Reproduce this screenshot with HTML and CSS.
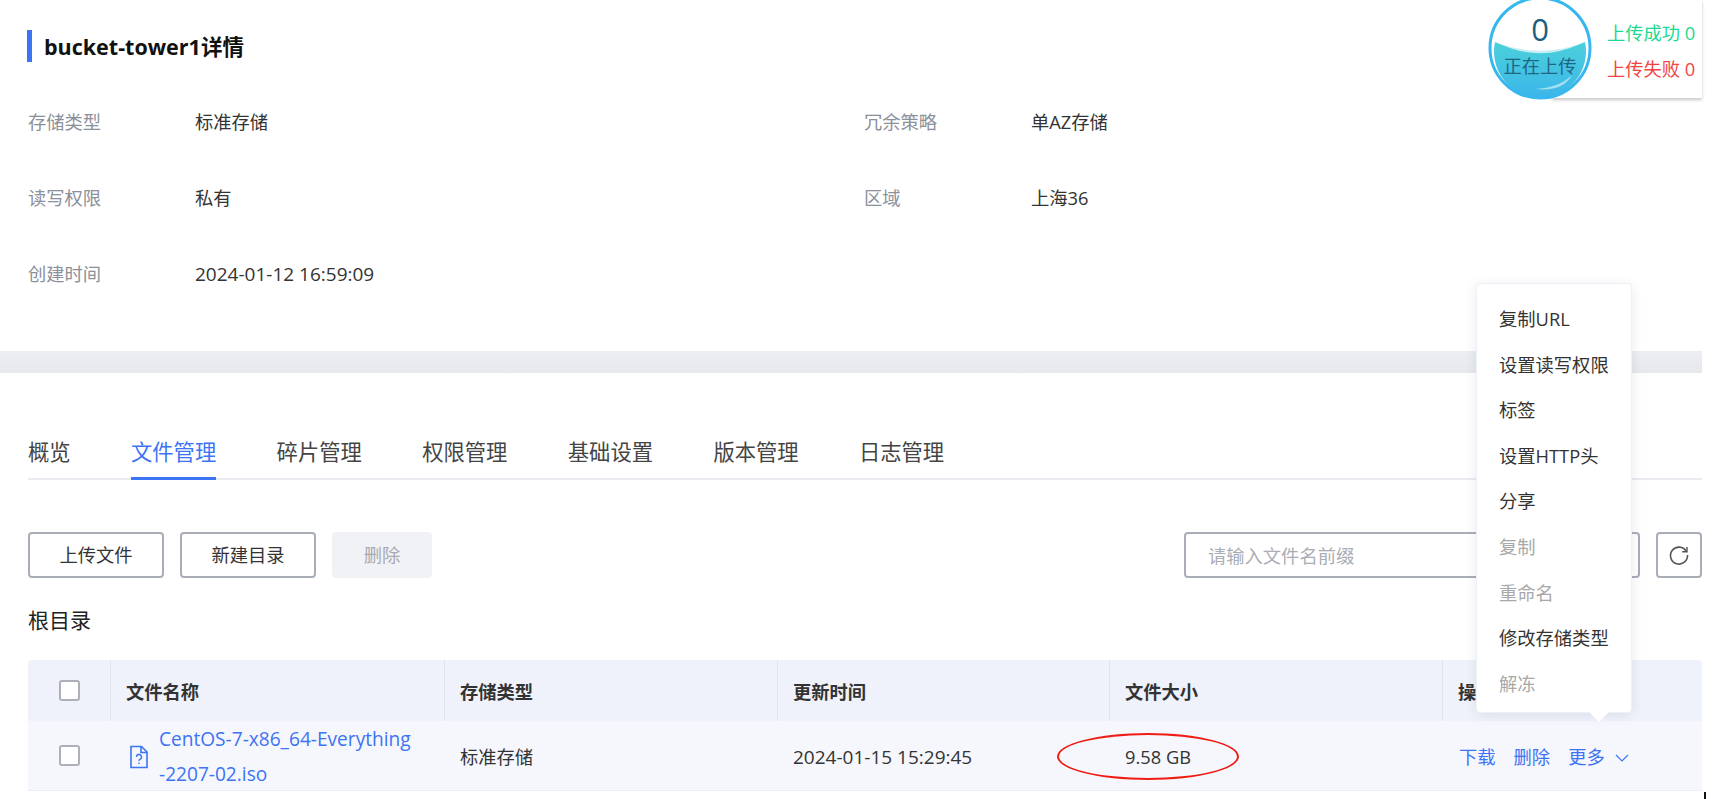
FILE: index.html
```html
<!DOCTYPE html>
<html>
<head>
  <title>bucket-tower1详情</title>
  <link rel="stylesheet" href="styles.css">
</head>
<body>
  <div class="page">
    <section class="detail">
      <h1 class="detail-title">bucket-tower1详情</h1>
      <div class="info-grid">
        <div class="info-item"><span class="info-label">存储类型</span><span>标准存储</span></div>
        <div class="info-item"><span class="info-label">冗余策略</span><span>单AZ存储</span></div>
        <div class="info-item"><span class="info-label">读写权限</span><span>私有</span></div>
        <div class="info-item"><span class="info-label">区域</span><span>上海36</span></div>
        <div class="info-item"><span class="info-label">创建时间</span><span class="date">2024-01-12 16:59:09</span></div>
      </div>
    </section>

    <div class="band"></div>

    <section class="files">
      <nav class="tabs">
        <a>概览</a>
        <a class="active">文件管理</a>
        <a>碎片管理</a>
        <a>权限管理</a>
        <a>基础设置</a>
        <a>版本管理</a>
        <a>日志管理</a>
      </nav>

      <div class="toolbar">
        <button class="btn">上传文件</button>
        <button class="btn">新建目录</button>
        <button class="btn btn-disabled">删除</button>
        <div class="search">请输入文件名前缀</div>
        <button class="btn-refresh">
          <svg width="22" height="22" viewBox="0 0 22 22" fill="none" stroke="#555" stroke-width="1.6">
            <path d="M18.3 7.2A8.5 8.5 0 1 0 19.5 11"/>
            <path d="M19 3v4.8h-4.8" stroke-width="1.4"/>
          </svg>
        </button>
      </div>

      <div class="crumb">根目录</div>

      <div class="table">
        <div class="table-row table-head">
          <div class="cell cell-check"><span class="checkbox"></span></div>
          <div class="cell cell-name">文件名称</div>
          <div class="cell cell-type">存储类型</div>
          <div class="cell cell-time">更新时间</div>
          <div class="cell cell-size">文件大小</div>
          <div class="cell cell-action">操作</div>
        </div>
        <div class="table-row table-body">
          <div class="cell cell-check"><span class="checkbox"></span></div>
          <div class="cell cell-name">
            <svg class="file-icon" width="20" height="24" viewBox="0 0 20 24" fill="none" stroke="#3d73f5" stroke-width="1.6">
              <path d="M2 1.5h10.5l5.5 5.5v15.5H2z"/>
              <path d="M12 1.5v6h6"/>
              <path d="M7.5 12a2.5 2.5 0 1 1 3.6 2.2c-.8.4-1.1.9-1.1 1.8" stroke-width="1.4"/>
              <path d="M10 17.5v1.5" stroke-width="1.4"/>
            </svg>
            <a class="file-link">CentOS-7-x86_64-Everything<br>-2207-02.iso</a>
          </div>
          <div class="cell cell-type">标准存储</div>
          <div class="cell cell-time date">2024-01-15 15:29:45</div>
          <div class="cell cell-size">9.58 GB</div>
          <div class="cell cell-action">
            <a>下载</a>
            <a>删除</a>
            <a>更多</a>
            <svg width="14" height="8" viewBox="0 0 14 8" fill="none" stroke="#3d73f5" stroke-width="1.2"><path d="M1 1l6 6 6-6"/></svg>
          </div>
        </div>
      </div>
    </section>
  </div>

  <!-- 上传状态悬浮框 -->
  <div class="upload-widget">
    <div class="upload-stats">
      <div class="stat-ok">上传成功 0</div>
      <div class="stat-fail">上传失败 0</div>
    </div>
    <svg class="upload-ball" width="106" height="106" viewBox="0 0 106 106">
      <defs>
        <linearGradient id="water" x1="0" y1="0" x2="0" y2="1">
          <stop offset="0" stop-color="#4bd0da"/>
          <stop offset="1" stop-color="#3cb6ea"/>
        </linearGradient>
      </defs>
      <circle cx="53" cy="53" r="51" fill="#fff"/>
      <path d="M8 47Q53 67 98 47A46 46 0 1 1 8 47z" fill="url(#water)"/>
      <path d="M12 48.5Q53 63 94 48.5Q53 68 12 48.5z" fill="#c8eef2"/>
      <path d="M48 94Q72 93 85 80Q76 97 48 94z" fill="#a5e0f2"/>
      <circle cx="53" cy="53" r="50" fill="none" stroke="#37b7ee" stroke-width="3"/>
      <text x="53" y="46" class="ball-num">0</text>
      <text x="53" y="78" class="ball-text">正在上传</text>
    </svg>
  </div>

  <!-- 更多 下拉菜单 -->
  <ul class="dropdown">
    <li>复制URL</li>
    <li>设置读写权限</li>
    <li>标签</li>
    <li>设置HTTP头</li>
    <li>分享</li>
    <li class="disabled">复制</li>
    <li class="disabled">重命名</li>
    <li>修改存储类型</li>
    <li class="disabled">解冻</li>
  </ul>

  <div class="red-mark"></div>
  <div class="corner-tick"></div>
</body>
</html>
```

FILE: styles.css
```css
* {
  box-sizing: border-box;
}

html,
body {
  margin: 0;
  height: 799px;
  overflow: hidden;
  background-color: #fff;
}

body {
  position: relative;
  font-family: "Open Sans", "Noto Sans CJK SC", sans-serif;
  font-size: 18.3px;
  line-height: 24px;
  color: #333;
}

.page {
  width: 1702px;
}

.detail {
  height: 351px;
  padding: 30px 0 0 28px;
}

.detail-title {
  margin: 0 0 0 -1px;
  height: 32px;
  padding: 1px 0 0 12px;
  border-left: 5px solid #3d73f5;
  font-size: 21.5px;
  line-height: 32px;
  font-weight: bold;
  color: #111;
}

.info-grid {
  display: grid;
  grid-template-columns: 836px 1fr;
  grid-auto-rows: 75.8px;
  margin-top: 47px;
}

.info-item {
  display: flex;
  align-items: center;
  height: 24px;
  margin-top: 1px;
}

.info-label {
  width: 167px;
  color: #8b909b;
}

.date {
  font-size: 19px;
}

.band {
  height: 22px;
  background: linear-gradient(#eceef2, #e6e8ec);
}

.files {
  padding: 0 0 0 28px;
}

.tabs {
  display: flex;
  gap: 60.4px;
  height: 107px;
  padding-top: 63px;
  border-bottom: 2px solid #e9ebf0;
  font-size: 21.3px;
  line-height: 32px;
  color: #444;
}

.tabs a {
  height: 44px;
}

.tabs .active {
  color: #3d73f5;
  border-bottom: 3px solid #3d73f5;
}

.toolbar {
  display: flex;
  align-items: center;
  gap: 16px;
  margin-top: 52px;
  height: 46px;
}

.btn {
  width: 136px;
  height: 46px;
  padding: 0;
  background: #fff;
  border: 2px solid #a9adb8;
  border-radius: 4px;
  font: inherit;
  color: #333;
}

.btn-disabled {
  width: 100px;
  background: #f1f2f6;
  border-color: #f1f2f6;
  color: #a8aab0;
}

.search {
  width: 456px;
  height: 46px;
  margin-left: auto;
  padding: 10px 22px;
  border: 2px solid #a9adb8;
  border-radius: 4px;
  color: #aaadb5;
}

.btn-refresh {
  display: flex;
  align-items: center;
  justify-content: center;
  width: 46px;
  height: 46px;
  padding: 0;
  background: #fff;
  border: 2px solid #a9adb8;
  border-radius: 4px;
}

.crumb {
  margin-top: 27px;
  font-size: 21px;
  line-height: 30px;
  color: #222;
}

.table {
  margin-top: 25px;
}

.table-row {
  display: flex;
  align-items: center;
}

.table-head {
  height: 61px;
  background-color: #eff2fa;
  border-radius: 4px 4px 0 0;
  font-weight: bold;
}

.table-body {
  height: 70px;
  background-color: #f5f7fc;
  border-bottom: 1px solid #edeff5;
}

.cell {
  display: flex;
  align-items: center;
  height: 100%;
  padding: 2px 0 0 15px;
}

.table-head .cell {
  border-right: 1px solid #e1e4ec;
}

.table-head .cell:last-child {
  border-right: 0;
}

.cell-check {
  justify-content: center;
  width: 83px;
  padding: 0;
}

.cell-name {
  width: 334px;
}

.cell-type {
  width: 333px;
}

.cell-time {
  width: 332px;
}

.cell-size {
  width: 333px;
}

.cell-action {
  flex: 1;
}

.table-body .cell-action {
  gap: 18px;
  padding-left: 16px;
  color: #3d73f5;
}

.table-body .cell-action svg {
  margin-left: -8px;
  margin-top: 2px;
}

.checkbox {
  width: 21px;
  height: 21px;
  background: #fff;
  border: 2px solid #adb0b9;
  border-radius: 3px;
}

.file-icon {
  flex: none;
  margin: 0 10px 0 3px;
}

.file-link {
  font-size: 19.1px;
  line-height: 35px;
  color: #3d73f5;
}

.upload-widget {
  position: absolute;
  top: 0;
  left: 1487px;
  width: 215px;
  height: 100px;
}

.upload-stats {
  position: absolute;
  top: 0;
  right: 0;
  width: 150px;
  height: 98px;
  padding: 15px 0 0 55px;
  background: #fff;
  box-shadow: 0 2px 3px rgba(0, 0, 0, 0.22);
  line-height: 36px;
  white-space: nowrap;
}

.stat-ok {
  color: #1ed98f;
}

.stat-fail {
  color: #f24343;
}

.upload-ball {
  position: absolute;
  top: -5px;
  left: 0;
}

.ball-num {
  font-size: 31px;
  fill: #1d5f82;
  text-anchor: middle;
}

.ball-text {
  font-size: 18.3px;
  fill: #1f6685;
  text-anchor: middle;
}

.dropdown {
  position: absolute;
  top: 283px;
  left: 1476px;
  width: 156px;
  height: 430px;
  margin: 0;
  padding: 12px 0 0 22px;
  list-style: none;
  background: #fff;
  border: 1px solid #eef0f5;
  border-radius: 4px;
  box-shadow: 0 2px 12px rgba(30, 50, 90, 0.1);
  line-height: 45.6px;
  color: #333;
}

.dropdown::after {
  content: "";
  position: absolute;
  left: 115px;
  bottom: -7px;
  width: 14px;
  height: 14px;
  background: #fff;
  transform: rotate(45deg);
}

.dropdown .disabled {
  color: #a8a8a8;
}

.red-mark {
  position: absolute;
  top: 733px;
  left: 1057px;
  width: 182px;
  height: 47px;
  border: 2.5px solid #f01c14;
  border-radius: 50%;
}

.corner-tick {
  position: absolute;
  top: 792px;
  left: 1704px;
  width: 2px;
  height: 7px;
  background-color: #111;
}
```
